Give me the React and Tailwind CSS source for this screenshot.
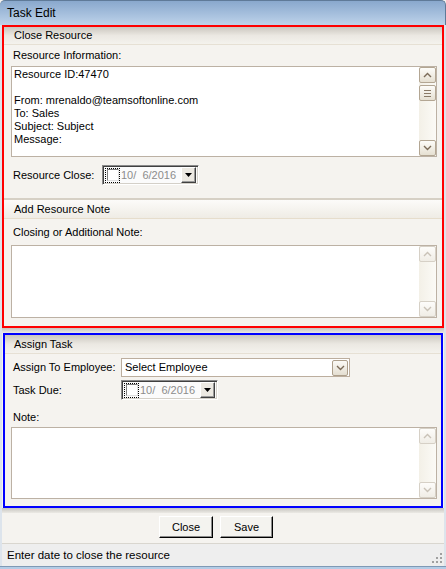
import React from 'react';

function Chevron({ up, color }) {
    return (
        <svg width="9" height="6" viewBox="0 0 9 6">
            <path
                d={up ? 'M1 5 L4.5 1.5 L8 5' : 'M1 1 L4.5 4.5 L8 1'}
                fill="none"
                stroke={color}
                strokeWidth="1.4"
            />
        </svg>
    );
}

function ScrollBtn({ up, active }) {
    return (
        <div
            className={
                active
                    ? 'h-[16px] w-[17px] rounded-[2px] border border-[#b3a693] bg-gradient-to-b from-[#fdfcf9] to-[#e6e0d2] flex items-center justify-center'
                    : 'h-[16px] w-[17px] rounded-[2px] border border-[#d6d0c6] bg-gradient-to-b from-[#fdfcfa] to-[#f0ede6] flex items-center justify-center'
            }
        >
            <Chevron up={up} color={active ? '#7b6b58' : '#c9c2b7'} />
        </div>
    );
}

function ScrollBar({ active }) {
    return (
        <div className="w-[17px] h-full flex flex-col justify-between bg-gradient-to-r from-[#f3f0e7] to-[#fbfaf6]">
            <div className="flex flex-col">
                <ScrollBtn up active={active} />
                {active && (
                    // thumb with grip lines
                    <div className="mt-[2px] h-[16px] w-[17px] rounded-[2px] border border-[#b3a693] bg-gradient-to-b from-[#fdfcf9] to-[#e6e0d2] flex flex-col items-center justify-center gap-[2px]">
                        <div className="w-[7px] h-[1px] bg-[#8a7a66]"></div>
                        <div className="w-[7px] h-[1px] bg-[#8a7a66]"></div>
                        <div className="w-[7px] h-[1px] bg-[#8a7a66]"></div>
                    </div>
                )}
            </div>
            <ScrollBtn active={active} />
        </div>
    );
}

function TextBox({ height, lines }) {
    return (
        <div className={`ml-[7px] w-[426px] ${height} border border-[#bcb1a4] bg-white flex`}>
            <div className="flex-1 pl-[2px] pt-[1px]">
                {lines && lines.map((line, i) => (
                    <div key={i} className="h-[13px] whitespace-pre">{line}</div>
                ))}
            </div>
            <ScrollBar active={!!lines} />
        </div>
    );
}

function DatePicker() {
    return (
        <div className="w-[97px] h-[20px] flex items-center border border-t-[#8a8a8a] border-l-[#8a8a8a] border-b-white border-r-white shadow-[inset_1px_1px_0_#404040,inset_-1px_-1px_0_#d4d0c8] bg-[#fbfbfb]">
            <div className="ml-[2px] w-[15px] h-[15px] flex items-center justify-center border border-dotted border-black">
                <div className="w-[12px] h-[12px] border border-[#808080] border-b-[#e0e0e0] border-r-[#e0e0e0] bg-white"></div>
            </div>
            <div className="ml-[1px] text-[#8c8c8c] whitespace-pre">10/  6/2016</div>
            <div className="ml-auto mr-[2px] w-[15px] h-[16px] bg-[#ece9e2] border border-t-white border-l-white border-b-[#404040] border-r-[#404040] shadow-[inset_-1px_-1px_0_#9a9a9a] flex items-center justify-center">
                <svg width="7" height="4" viewBox="0 0 7 4">
                    <path d="M0 0 L7 0 L3.5 4 Z" fill="#000" />
                </svg>
            </div>
        </div>
    );
}

function Button({ label, width }) {
    return (
        <div className={`${width} h-[22px] flex items-center justify-center bg-[#f4f3ef] border border-t-white border-l-white border-b-black border-r-black shadow-[inset_-1px_-1px_0_#8a8a8a]`}>
            {label}
        </div>
    );
}

export default function App() {
    return (
        <div className="w-[446px] h-[569px] flex flex-col bg-[#f5f3ef] text-black text-[11px] leading-[13px] font-['Liberation_Sans',Arial,sans-serif] overflow-hidden">
            {/* Title bar */}
            <div className="h-[25px] shrink-0 flex items-center pl-[7px] text-[12px] rounded-tl-[5px] rounded-tr-[5px] border-t border-r border-[#5f7a98] bg-gradient-to-b from-[#89a8cd] to-[#bed3ea]">
                Task Edit
            </div>

            <div className="flex-1 flex flex-col border-x-2 border-[#dde4ec]">
                {/* Close Resource panel */}
                <div className="h-[303px] shrink-0 flex flex-col border-2 border-[#ff0000]">
                    <div className="h-[18px] flex items-center pl-[10px] border-b border-[#e6e0d4] bg-gradient-to-b from-[#cbc7bf] via-[#ebe8e2] to-[#f4f2ed]">
                        Close Resource
                    </div>
                    <div className="h-[21px] flex items-center pl-[9px]">Resource Information:</div>
                    <TextBox
                        height="h-[91px]"
                        lines={[
                            'Resource ID:47470',
                            '',
                            'From: mrenaldo@teamsoftonline.com',
                            'To: Sales',
                            'Subject: Subject',
                            'Message:',
                        ]}
                    />
                    <div className="mt-[8px] h-[20px] flex items-center pl-[9px]">
                        <div className="w-[89px]">Resource Close:</div>
                        <DatePicker />
                    </div>
                    <div className="mt-[13px] h-[21px] flex items-center pl-[10px] border-t-2 border-t-[#d6d0c5] border-b border-b-[#e6ddcc] bg-gradient-to-b from-[#fcfbf9] to-[#efece5]">
                        Add Resource Note
                    </div>
                    <div className="h-[26px] flex items-center pl-[9px]">Closing or Additional Note:</div>
                    <TextBox height="h-[73px]" />
                </div>

                <div className="h-[5px] shrink-0 bg-gradient-to-b from-[#c6c4bf] to-[#ebe9e4]"></div>

                {/* Assign Task panel */}
                <div className="h-[175px] shrink-0 mx-[1px] flex flex-col border-2 border-[#0000ff]">
                    <div className="h-[19px] flex items-center pl-[9px] border-b border-[#e6e0d4] bg-gradient-to-b from-[#cbc7bf] via-[#ebe8e2] to-[#f4f2ed]">
                        Assign Task
                    </div>
                    <div className="mt-[4px] h-[19px] flex items-center pl-[8px]">
                        <div className="w-[108px]">Assign To Employee:</div>
                        <div className="w-[229px] h-[19px] flex items-center border border-[#bcae9e] bg-white">
                            <div className="pl-[3px]">Select Employee</div>
                            <div className="ml-auto mr-[1px] w-[16px] h-[16px] rounded-[2px] border border-[#ad9f8b] bg-gradient-to-b from-[#fbfaf6] to-[#e4ded1] flex items-center justify-center">
                                <Chevron color="#7b6b58" />
                            </div>
                        </div>
                    </div>
                    <div className="mt-[3px] h-[20px] flex items-center pl-[8px]">
                        <div className="w-[108px]">Task Due:</div>
                        <DatePicker />
                    </div>
                    <div className="h-[27px] pt-[11px] pl-[8px]">Note:</div>
                    <div className="-ml-[1px]">
                        <TextBox height="h-[72px]" />
                    </div>
                </div>

                <div className="h-[5px] shrink-0 bg-gradient-to-b from-[#c6c4bf] to-[#ebe9e4]"></div>

                {/* Buttons */}
                <div className="mt-[3px] h-[22px] shrink-0 flex gap-[7px] pl-[157px]">
                    <Button label="Close" width="w-[54px]" />
                    <Button label="Save" width="w-[53px]" />
                </div>
                <div className="h-[5px] shrink-0"></div>

                {/* Status bar */}
                <div className="h-[23px] shrink-0 flex items-center pl-[5px] border-t border-[#d9d6cf] bg-[#eeeeee]">
                    <div className="flex-1 text-[11.5px]">Enter date to close the resource</div>
                    <svg width="11" height="11" viewBox="0 0 11 11" className="self-end mb-[2px] mr-[1px]">
                        <rect x="8" y="0" width="2" height="2" fill="#a0a0a0" />
                        <rect x="4" y="4" width="2" height="2" fill="#a0a0a0" />
                        <rect x="8" y="4" width="2" height="2" fill="#a0a0a0" />
                        <rect x="0" y="8" width="2" height="2" fill="#a0a0a0" />
                        <rect x="4" y="8" width="2" height="2" fill="#a0a0a0" />
                        <rect x="8" y="8" width="2" height="2" fill="#a0a0a0" />
                    </svg>
                </div>
            </div>
            <div className="h-[3px] shrink-0 bg-[#b3cce6] border-t border-[#7f99b5]"></div>
        </div>
    );
}
